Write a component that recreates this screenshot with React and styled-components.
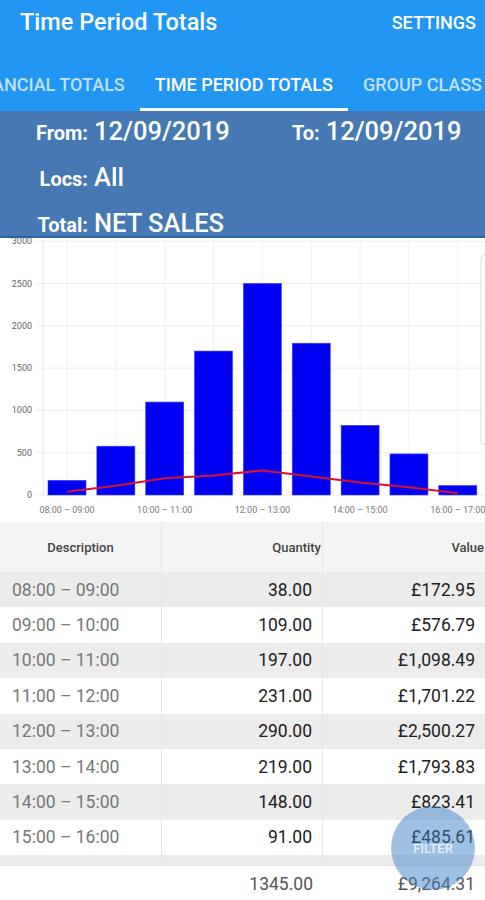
import React from 'react';
import styled, { createGlobalStyle } from 'styled-components';

const GlobalStyle = createGlobalStyle`
  html, body {
    margin: 0;
    padding: 0;
    background: #ffffff;
    font-family: Roboto, "Noto Sans", Arial, sans-serif;
  }
`;

const Screen = styled.div`
  position: relative;
  width: 485px;
  height: 900px;
  overflow: hidden;
  display: flex;
  flex-direction: column;
  background: #ffffff;
`;

const AppBar = styled.header`
  background: #2196f3;
  color: #ffffff;
  flex: none;
`;

const Toolbar = styled.div`
  height: 60px;
  display: flex;
  justify-content: space-between;
  align-items: flex-start;
  padding: 8px 9px 0 20px;
  box-sizing: border-box;
`;

const Title = styled.h1`
  margin: 0;
  font-size: 23.5px;
  line-height: 29px;
  font-weight: 500;
`;

const Action = styled.span`
  font-size: 18px;
  line-height: 29px;
  font-weight: 500;
`;

const TabStrip = styled.nav`
  height: 51px;
  display: flex;
  margin-left: -51px;
  white-space: nowrap;
`;

const Tab = styled.div`
  flex: none;
  display: flex;
  align-items: center;
  padding: 0 15px;
  font-size: 18px;
  font-weight: 500;
  color: ${p => (p.active ? '#ffffff' : 'rgba(255, 255, 255, 0.72)')};
  border-bottom: 3px solid ${p => (p.active ? '#ffffff' : 'transparent')};
`;

const FilterPanel = styled.section`
  flex: none;
  height: 127px;
  box-sizing: border-box;
  padding-top: 5px;
  background: #4679b3;
  border-bottom: 2px solid #2f62a0;
  color: #ffffff;
  display: flex;
  flex-direction: column;
  gap: 16px;
`;

const FilterRow = styled.div`
  height: 30px;
  display: grid;
  grid-template-columns: 88px 192px max-content max-content;
  column-gap: 6px;
  align-items: baseline;
`;

const Label = styled.span`
  justify-self: end;
  font-size: 20px;
  font-weight: 700;
`;

const Value = styled.span`
  font-size: 25.5px;
  font-weight: 500;
  line-height: 30px;
`;

const ChartBox = styled.div`
  flex: none;
  height: 284px;
  background: #ffffff;
`;

const TableHead = styled.div`
  flex: none;
  height: 50px;
  display: grid;
  grid-template-columns: 162px 161px 162px;
  background: #f4f4f4;
  font-size: 13px;
  font-weight: 500;
  color: #444444;
`;

const HeadCell = styled.div`
  display: flex;
  align-items: center;
  justify-content: ${p => (p.align === 'center' ? 'center' : 'flex-end')};
  padding-right: ${p => (p.align === 'center' ? '0' : '1px')};
  border-right: ${p => (p.last ? 'none' : '1px solid #e6e6e6')};
`;

const TableBody = styled.div`
  flex: none;
  height: 293px;
  overflow: hidden;
`;

const Row = styled.div`
  height: 35.4px;
  display: grid;
  grid-template-columns: 162px 161px 162px;
  background: ${p => (p.shaded ? '#ececec' : '#ffffff')};
  font-size: 17.5px;
`;

const Cell = styled.div`
  display: flex;
  align-items: center;
  justify-content: ${p => (p.left ? 'flex-start' : 'flex-end')};
  padding: ${p => (p.left ? '0 0 0 12px' : '0 10px 0 0')};
  color: ${p => (p.muted ? '#777777' : '#212121')};
  border-right: ${p => (p.last ? 'none' : '1px solid #e6e6e6')};
`;

const Footer = styled.div`
  flex: none;
  height: 35px;
  display: grid;
  grid-template-columns: 162px 161px 162px;
  border-top: 1px solid #e2e2e2;
  font-size: 17.5px;
  color: #555555;
`;

const FooterCell = styled.div`
  display: flex;
  align-items: center;
  justify-content: flex-end;
  padding-right: 10px;
`;

const Fab = styled.button`
  position: absolute;
  left: 391px;
  top: 806px;
  width: 84px;
  height: 84px;
  border-radius: 50%;
  border: none;
  background: rgba(63, 127, 200, 0.5);
  color: rgba(255, 255, 255, 0.75);
  font-family: inherit;
  font-size: 13px;
  font-weight: 500;
  padding: 0;
  display: flex;
  align-items: center;
  justify-content: center;
`;

const periods = [
  { label: '08:00 – 09:00', qty: 38, value: 172.95 },
  { label: '09:00 – 10:00', qty: 109, value: 576.79 },
  { label: '10:00 – 11:00', qty: 197, value: 1098.49 },
  { label: '11:00 – 12:00', qty: 231, value: 1701.22 },
  { label: '12:00 – 13:00', qty: 290, value: 2500.27 },
  { label: '13:00 – 14:00', qty: 219, value: 1793.83 },
  { label: '14:00 – 15:00', qty: 148, value: 823.41 },
  { label: '15:00 – 16:00', qty: 91, value: 485.61 },
  { label: '16:00 – 17:00', qty: 22, value: 111.74 }
];

const money = n =>
  '£' + n.toLocaleString('en-GB', { minimumFractionDigits: 2, maximumFractionDigits: 2 });

// chart geometry, in svg px
const ZERO_Y = 257;
const PX_PER_UNIT = 42.3 / 500;
const BAR_X0 = 48;
const BAR_STEP = 48.85;
const BAR_W = 38;
const yOf = v => ZERO_Y - v * PX_PER_UNIT;
const centerOf = i => BAR_X0 + i * BAR_STEP + BAR_W / 2;

const SalesChart = () => {
  const ticks = [0, 500, 1000, 1500, 2000, 2500, 3000];
  const linePoints = periods.map((p, i) => `${centerOf(i)},${yOf(p.qty)}`).join(' ');

  return (
    <svg width="485" height="284" viewBox="0 0 485 284">
      {ticks.map(t => (
        <g key={t}>
          <line x1="36" x2="485" y1={yOf(t)} y2={yOf(t)} stroke="#eeeeee" strokeWidth="1" />
          <text
            x="32"
            y={yOf(t) + 3}
            textAnchor="end"
            fontSize="9"
            fill="#666666"
            fontFamily="Roboto, sans-serif"
          >
            {t}
          </text>
        </g>
      ))}
      {periods.map((p, i) => (
        <line
          key={p.label}
          x1={centerOf(i)}
          x2={centerOf(i)}
          y1="2"
          y2={ZERO_Y + 4}
          stroke="#f0f0f0"
          strokeWidth="1"
        />
      ))}
      <line x1="43" x2="43" y1="2" y2={ZERO_Y} stroke="#e6e6e6" strokeWidth="1" />
      <rect x="481" y="17" width="20" height="190" rx="4" fill="#ffffff" stroke="#dddddd" />
      {periods.map((p, i) => (
        <rect
          key={p.label}
          x={BAR_X0 + i * BAR_STEP}
          y={yOf(p.value)}
          width={BAR_W}
          height={p.value * PX_PER_UNIT}
          fill="#0000f2"
          stroke="#3a3aff"
          strokeWidth="0.6"
        />
      ))}
      <polyline points={linePoints} fill="none" stroke="#d8112d" strokeWidth="2" strokeLinejoin="round" />
      {periods.map((p, i) =>
        i % 2 === 0 ? (
          <text
            key={p.label}
            x={centerOf(i)}
            y="275"
            textAnchor="middle"
            fontSize="9"
            fill="#777777"
            fontFamily="Roboto, sans-serif"
          >
            {p.label}
          </text>
        ) : null
      )}
    </svg>
  );
};

export default function App() {
  const totalQty = periods.reduce((s, p) => s + p.qty, 0);
  const totalValue = periods.reduce((s, p) => s + p.value, 0);

  return (
    <>
      <GlobalStyle />
      <Screen>
        <AppBar>
          <Toolbar>
            <Title>Time Period Totals</Title>
            <Action>SETTINGS</Action>
          </Toolbar>
          <TabStrip>
            <Tab>FINANCIAL TOTALS</Tab>
            <Tab active>TIME PERIOD TOTALS</Tab>
            <Tab>GROUP CLASS TOTALS</Tab>
          </TabStrip>
        </AppBar>

        <FilterPanel>
          <FilterRow>
            <Label>From:</Label>
            <Value>12/09/2019</Value>
            <Label>To:</Label>
            <Value>12/09/2019</Value>
          </FilterRow>
          <FilterRow>
            <Label>Locs:</Label>
            <Value>All</Value>
          </FilterRow>
          <FilterRow>
            <Label>Total:</Label>
            <Value>NET SALES</Value>
          </FilterRow>
        </FilterPanel>

        <ChartBox>
          <SalesChart />
        </ChartBox>

        <TableHead>
          <HeadCell align="center">Description</HeadCell>
          <HeadCell>Quantity</HeadCell>
          <HeadCell last>Value</HeadCell>
        </TableHead>

        <TableBody>
          {periods.map((p, i) => (
            <Row key={p.label} shaded={i % 2 === 0}>
              <Cell left muted>{p.label}</Cell>
              <Cell>{p.qty.toFixed(2)}</Cell>
              <Cell last>{money(p.value)}</Cell>
            </Row>
          ))}
        </TableBody>

        <Footer>
          <div />
          <FooterCell>{totalQty.toFixed(2)}</FooterCell>
          <FooterCell>{money(totalValue)}</FooterCell>
        </Footer>

        <Fab>FILTER</Fab>
      </Screen>
    </>
  );
}
